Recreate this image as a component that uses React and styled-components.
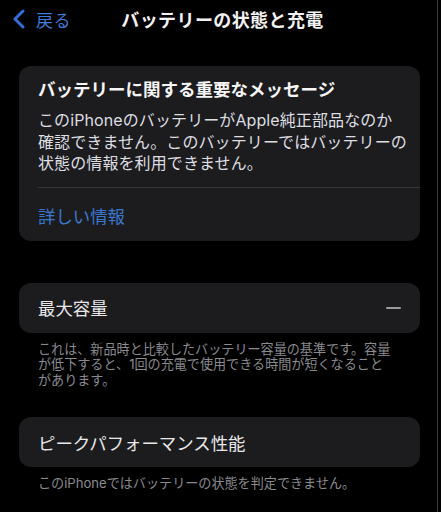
import React from "react"
import styled, { createGlobalStyle } from "styled-components"

const GlobalStyle = createGlobalStyle`
  html, body {
    margin: 0;
    padding: 0;
    background: #000;
  }
  body {
    font-family: Inter, "Noto Sans CJK JP", "Noto Sans", sans-serif;
    -webkit-font-smoothing: antialiased;
  }
`

const Screen = styled.div`
  width: 438px;
  height: 512px;
  box-sizing: border-box;
  background: #000;
  border-right: 1px solid #3a3a3c;
  overflow: hidden;
  color: #fff;
`

const NavBar = styled.header`
  display: grid;
  grid-template-columns: 1fr auto 1fr;
  align-items: center;
  height: 38px;
  padding: 0 12px;
`

const BackButton = styled.div`
  display: flex;
  align-items: center;
  gap: 10px;
  color: #3d7bd6;
  font-size: 17px;
  letter-spacing: 0.5px;

  svg {
    display: block;
  }
`

const Title = styled.h1`
  margin: 0;
  font-size: 18px;
  font-weight: 700;
  letter-spacing: 0.4px;
  color: #f2f2f2;
  transform: translateX(4px);
`

const Content = styled.main`
  display: flex;
  flex-direction: column;
  padding: 28px 17px 0 19px;
`

const Card = styled.section`
  background: #1c1c1e;
  border-radius: 12px;
  overflow: hidden;
`

const MessageBody = styled.div`
  padding: 12px 10px 12px 19px;
`

const MessageTitle = styled.h2`
  margin: 0 0 8px;
  font-size: 17.5px;
  line-height: 24px;
  font-weight: 700;
  color: #f5f5f5;
`

const MessageText = styled.p`
  margin: 0;
  font-size: 16px;
  line-height: 21.5px;
  color: #dedee2;
  letter-spacing: 0.1px;
`

const Line = styled.span`
  display: block;
  white-space: nowrap;
`

const Divider = styled.div`
  height: 1px;
  margin-left: 19px;
  background: #38383c;
`

const LinkRow = styled.div`
  height: 51px;
  display: flex;
  align-items: center;
  padding: 2px 19px 0;
  font-size: 17.4px;
  color: #3a78d0;
`

const Row = styled.div`
  height: 50px;
  display: flex;
  align-items: center;
  justify-content: space-between;
  padding: 0 19px;
  font-size: 17.4px;
  color: #e8e8ea;
`

const Dash = styled.span`
  width: 15px;
  height: 2px;
  border-radius: 1px;
  background: #9a9a9e;
`

const Footnote = styled.p`
  margin: ${({ $top }) => $top}px 0 0;
  padding: 0 10px 0 19px;
  font-size: 13.1px;
  line-height: 15.6px;
  color: #8a8a8f;
`

const Spacer = styled.div`
  height: ${({ $h }) => $h}px;
  flex: none;
`

export default function App() {
  return (
    <>
      <GlobalStyle />
      <Screen>
        <NavBar>
          <BackButton>
            <svg width="14" height="20" viewBox="0 0 14 20">
              <path
                d="M11 2 L3 10 L11 18"
                fill="none"
                stroke="#2f6fd6"
                strokeWidth="3"
                strokeLinecap="round"
                strokeLinejoin="round"
              />
            </svg>
            戻る
          </BackButton>
          <Title>バッテリーの状態と充電</Title>
          <div />
        </NavBar>

        <Content>
          <Card>
            <MessageBody>
              <MessageTitle>バッテリーに関する重要なメッセージ</MessageTitle>
              <MessageText>
                <Line>このiPhoneのバッテリーがApple純正部品なのか</Line>
                <Line>確認できません。このバッテリーではバッテリーの</Line>
                <Line>状態の情報を利用できません。</Line>
              </MessageText>
            </MessageBody>
            <Divider />
            <LinkRow>詳しい情報</LinkRow>
          </Card>

          <Spacer $h={42} />

          <Card>
            <Row>
              最大容量
              <Dash />
            </Row>
          </Card>
          <Footnote $top={9}>
            <Line>これは、新品時と比較したバッテリー容量の基準です。容量</Line>
            <Line>が低下すると、1回の充電で使用できる時間が短くなること</Line>
            <Line>があります。</Line>
          </Footnote>

          <Spacer $h={29} />

          <Card>
            <Row>ピークパフォーマンス性能</Row>
          </Card>
          <Footnote $top={9}>
            <Line>このiPhoneではバッテリーの状態を判定できません。</Line>
          </Footnote>
        </Content>
      </Screen>
    </>
  )
}
